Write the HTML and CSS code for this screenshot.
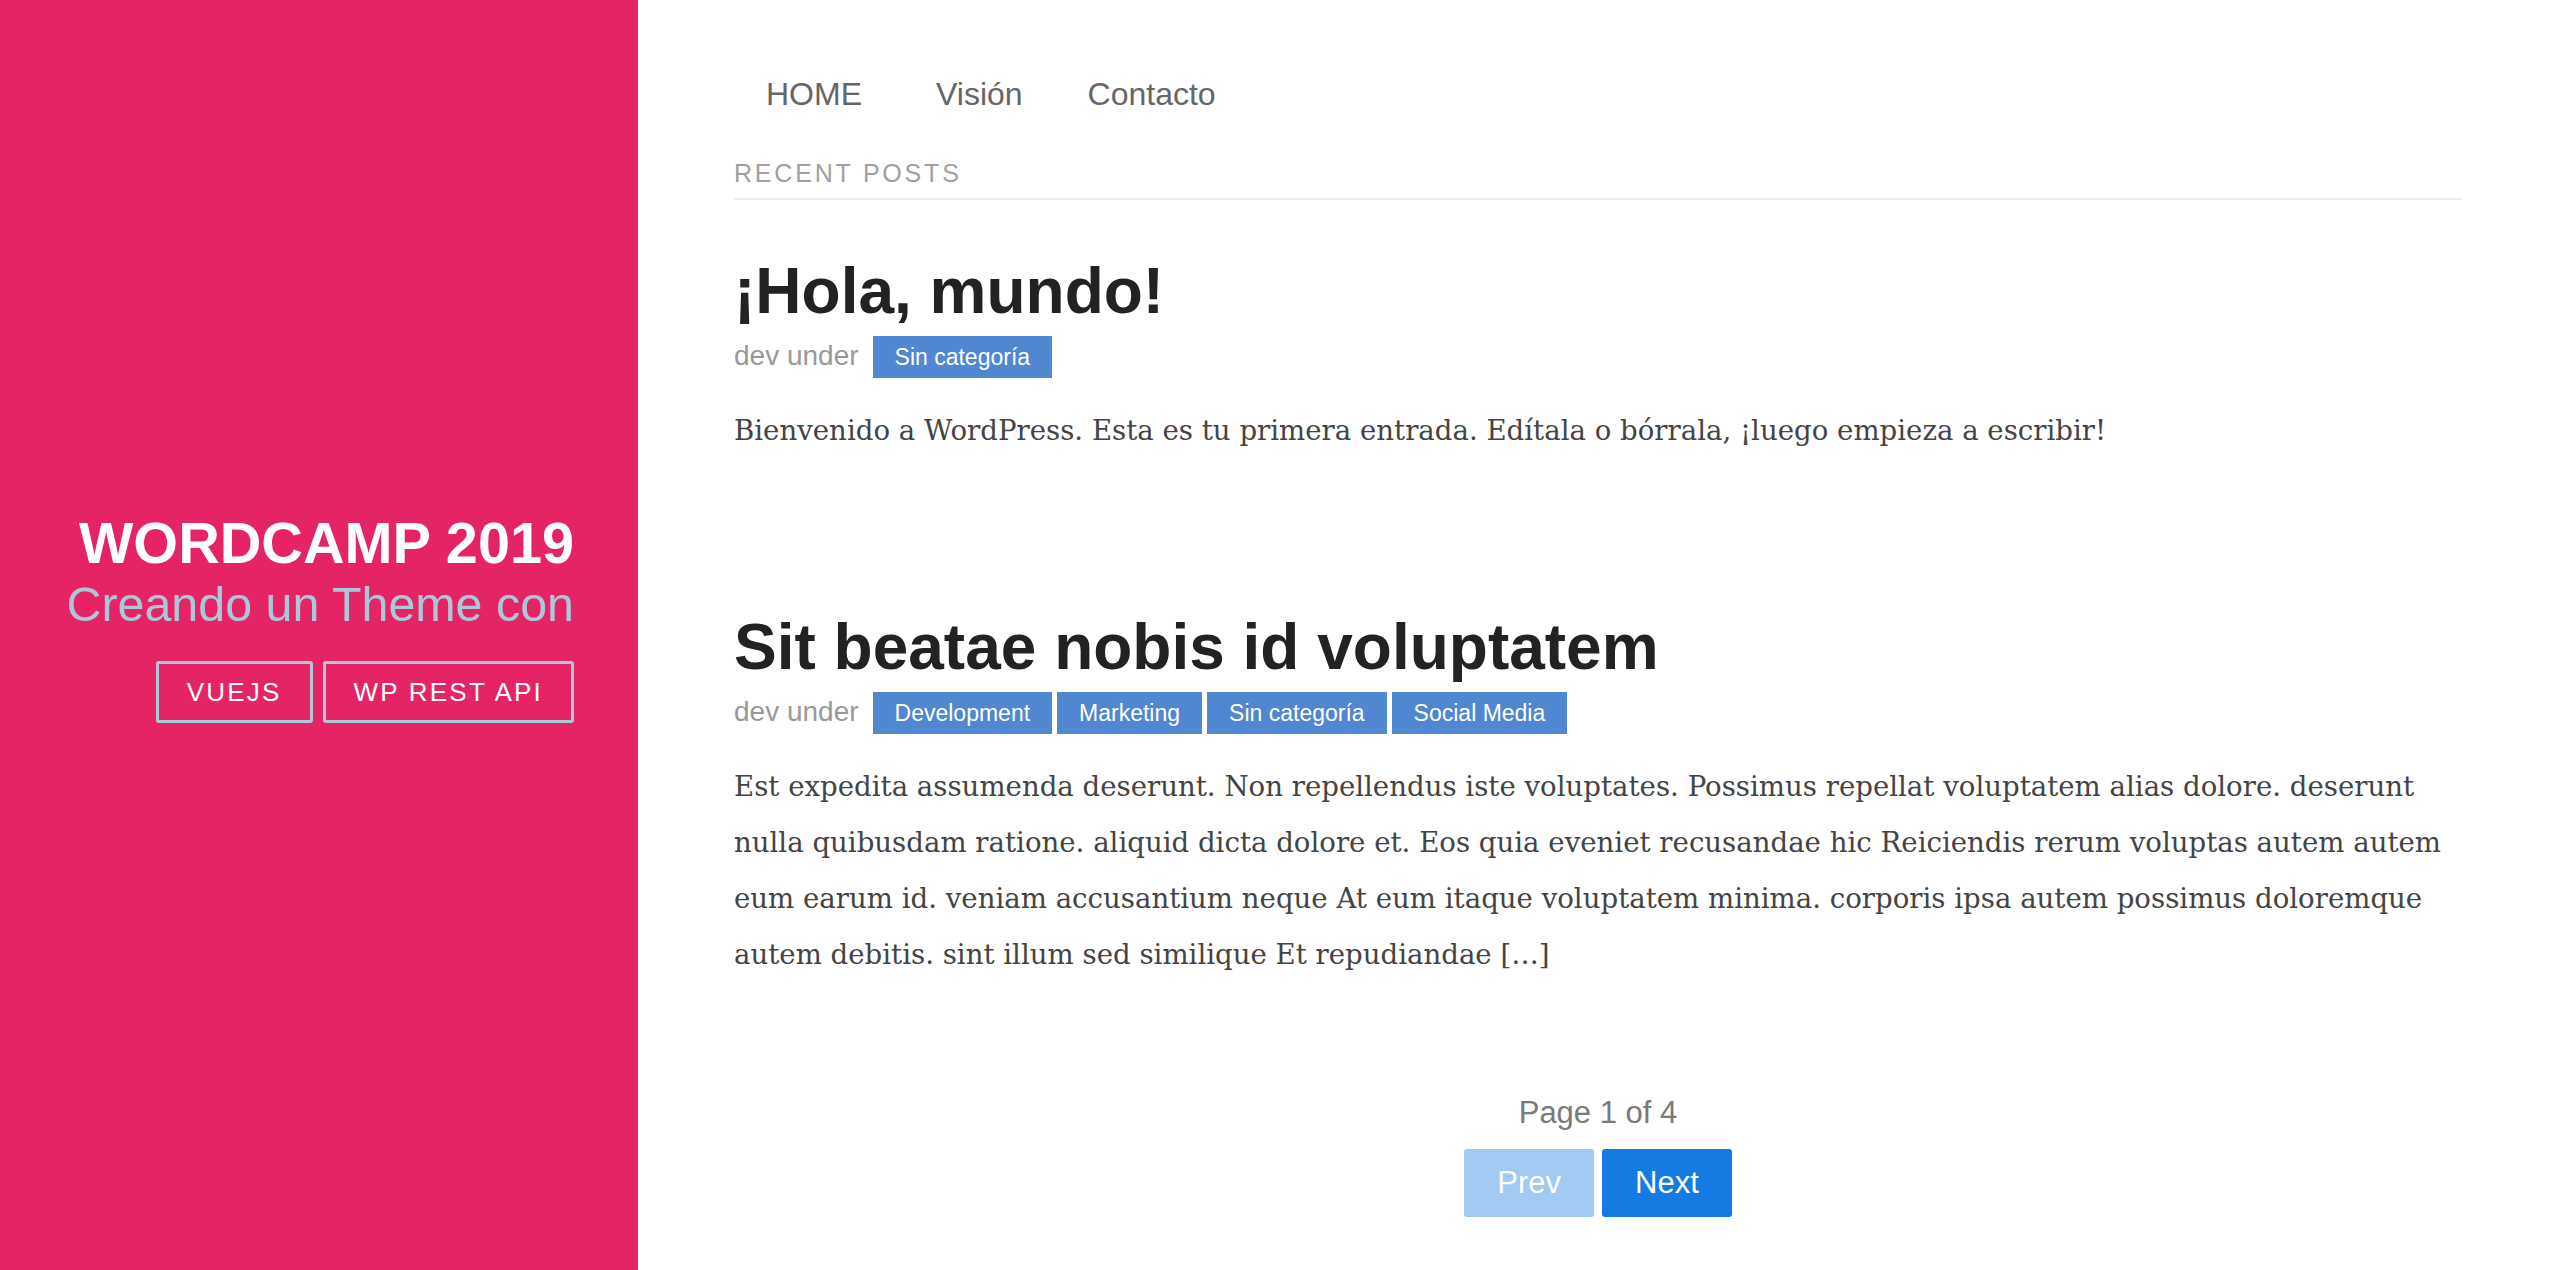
FILE: index.html
```html
<!DOCTYPE html>
<html lang="es">
<head>
<meta charset="utf-8">
<title>WordCamp 2019</title>
<link rel="stylesheet" href="styles.css">
</head>
<body>
<div class="layout">
  <aside class="sidebar">
    <h1 class="site-title">WORDCAMP 2019</h1>
    <h2 class="site-subtitle">Creando un Theme con</h2>
    <div class="sidebar-buttons">
      <a class="outline-btn" href="#">VUEJS</a>
      <a class="outline-btn" href="#">WP REST API</a>
    </div>
  </aside>
  <main class="main">
    <nav class="nav">
      <a class="nav-link" href="#">HOME</a>
      <a class="nav-link nav-link-vision" href="#">Visión</a>
      <a class="nav-link" href="#">Contacto</a>
    </nav>
    <h3 class="section-title">RECENT POSTS</h3>
    <div class="posts">
      <article class="post">
        <h2 class="post-title">¡Hola, mundo!</h2>
        <div class="post-meta">
          <span class="author">dev under</span>
          <div class="tags">
            <a class="tag" href="#">Sin categoría</a>
          </div>
        </div>
        <p class="excerpt">Bienvenido a WordPress. Esta es tu primera entrada. Edítala o bórrala, ¡luego empieza a escribir!</p>
      </article>
      <article class="post">
        <h2 class="post-title">Sit beatae nobis id voluptatem</h2>
        <div class="post-meta">
          <span class="author">dev under</span>
          <div class="tags">
            <a class="tag" href="#">Development</a>
            <a class="tag" href="#">Marketing</a>
            <a class="tag" href="#">Sin categoría</a>
            <a class="tag" href="#">Social Media</a>
          </div>
        </div>
        <p class="excerpt">Est expedita assumenda deserunt. Non repellendus iste voluptates. Possimus repellat voluptatem alias dolore. deserunt nulla quibusdam ratione. aliquid dicta dolore et. Eos quia eveniet recusandae hic Reiciendis rerum voluptas autem autem eum earum id. veniam accusantium neque At eum itaque voluptatem minima. corporis ipsa autem possimus doloremque autem debitis. sint illum sed similique Et repudiandae [&hellip;]</p>
      </article>
    </div>
    <div class="pagination">
      <div class="page-info">Page 1 of 4</div>
      <div class="page-buttons">
        <a class="page-btn page-btn-disabled" href="#">Prev</a>
        <a class="page-btn page-btn-active" href="#">Next</a>
      </div>
    </div>
  </main>
</div>
</body>
</html>
```

FILE: styles.css
```css
html, body {
  margin: 0;
  padding: 0;
  height: 100%;
  overflow: hidden;
  background: #ffffff;
  font-family: "Liberation Sans", Arial, Helvetica, sans-serif;
}

a {
  text-decoration: none;
}

.layout {
  display: flex;
  height: 100vh;
}

/* Sidebar */
.sidebar {
  width: 638px;
  flex: 0 0 638px;
  box-sizing: border-box;
  background: #e52465;
  display: flex;
  flex-direction: column;
  justify-content: center;
  align-items: flex-end;
  padding: 0 64px 38px 0;
  text-align: right;
}

.site-title {
  margin: 0;
  font-size: 57.6px;
  font-weight: 700;
  line-height: normal;
  color: #ffffff;
}

.site-subtitle {
  margin: 0;
  font-size: 48.4px;
  font-weight: 400;
  line-height: normal;
  color: #abc8da;
}

.sidebar-buttons {
  display: flex;
  gap: 10px;
  margin-top: 29px;
}

.outline-btn {
  display: block;
  border: 3px solid #b0c9d8;
  border-radius: 3px;
  padding: 13px 28px;
  line-height: 30px;
  font-size: 26px;
  letter-spacing: 2.2px;
  color: #ffffff;
}

/* Main */
.main {
  flex: 1;
  min-width: 0;
  padding: 76px 96px 0;
}

.nav {
  display: flex;
  gap: 65px;
  padding-left: 32px;
  font-size: 32px;
  line-height: normal;
}

.nav-link {
  color: #666666;
}

.nav-link-vision {
  margin-left: 9px;
}

.section-title {
  margin: 46px 0 0;
  padding-bottom: 10px;
  border-bottom: 2px solid #eeeeee;
  font-size: 25px;
  font-weight: 400;
  letter-spacing: 2.8px;
  line-height: normal;
  color: #a0a0a0;
}

.posts {
  display: flex;
  flex-direction: column;
  gap: 150px;
  margin-top: 53px;
}

.post-title {
  margin: 0;
  font-size: 64px;
  font-weight: 700;
  line-height: 76.8px;
  color: #222222;
}

.post-meta {
  display: flex;
  align-items: baseline;
  gap: 14px;
  margin-top: 6px;
}

.author {
  font-size: 28px;
  color: #999999;
}

.tags {
  display: flex;
  gap: 5px;
}

.tag {
  display: block;
  background: #5087d0;
  color: #ffffff;
  font-size: 23px;
  line-height: 42px;
  padding: 0 22px;
}

.excerpt {
  margin: 25px 0 0;
  font-family: "DejaVu Serif", Georgia, serif;
  font-size: 27.6px;
  line-height: 56px;
  color: #444444;
}

/* Pagination */
.pagination {
  margin-top: 112px;
  display: flex;
  flex-direction: column;
  align-items: center;
}

.page-info {
  font-size: 31px;
  line-height: normal;
  color: #7a7a7a;
}

.page-buttons {
  display: flex;
  gap: 8px;
  margin-top: 18px;
}

.page-btn {
  display: block;
  border-radius: 3px;
  padding: 16px 33px;
  font-size: 31px;
  line-height: 36px;
  color: #ffffff;
}

.page-btn-disabled {
  background: #a2caf3;
}

.page-btn-active {
  background: #157be3;
}
```
